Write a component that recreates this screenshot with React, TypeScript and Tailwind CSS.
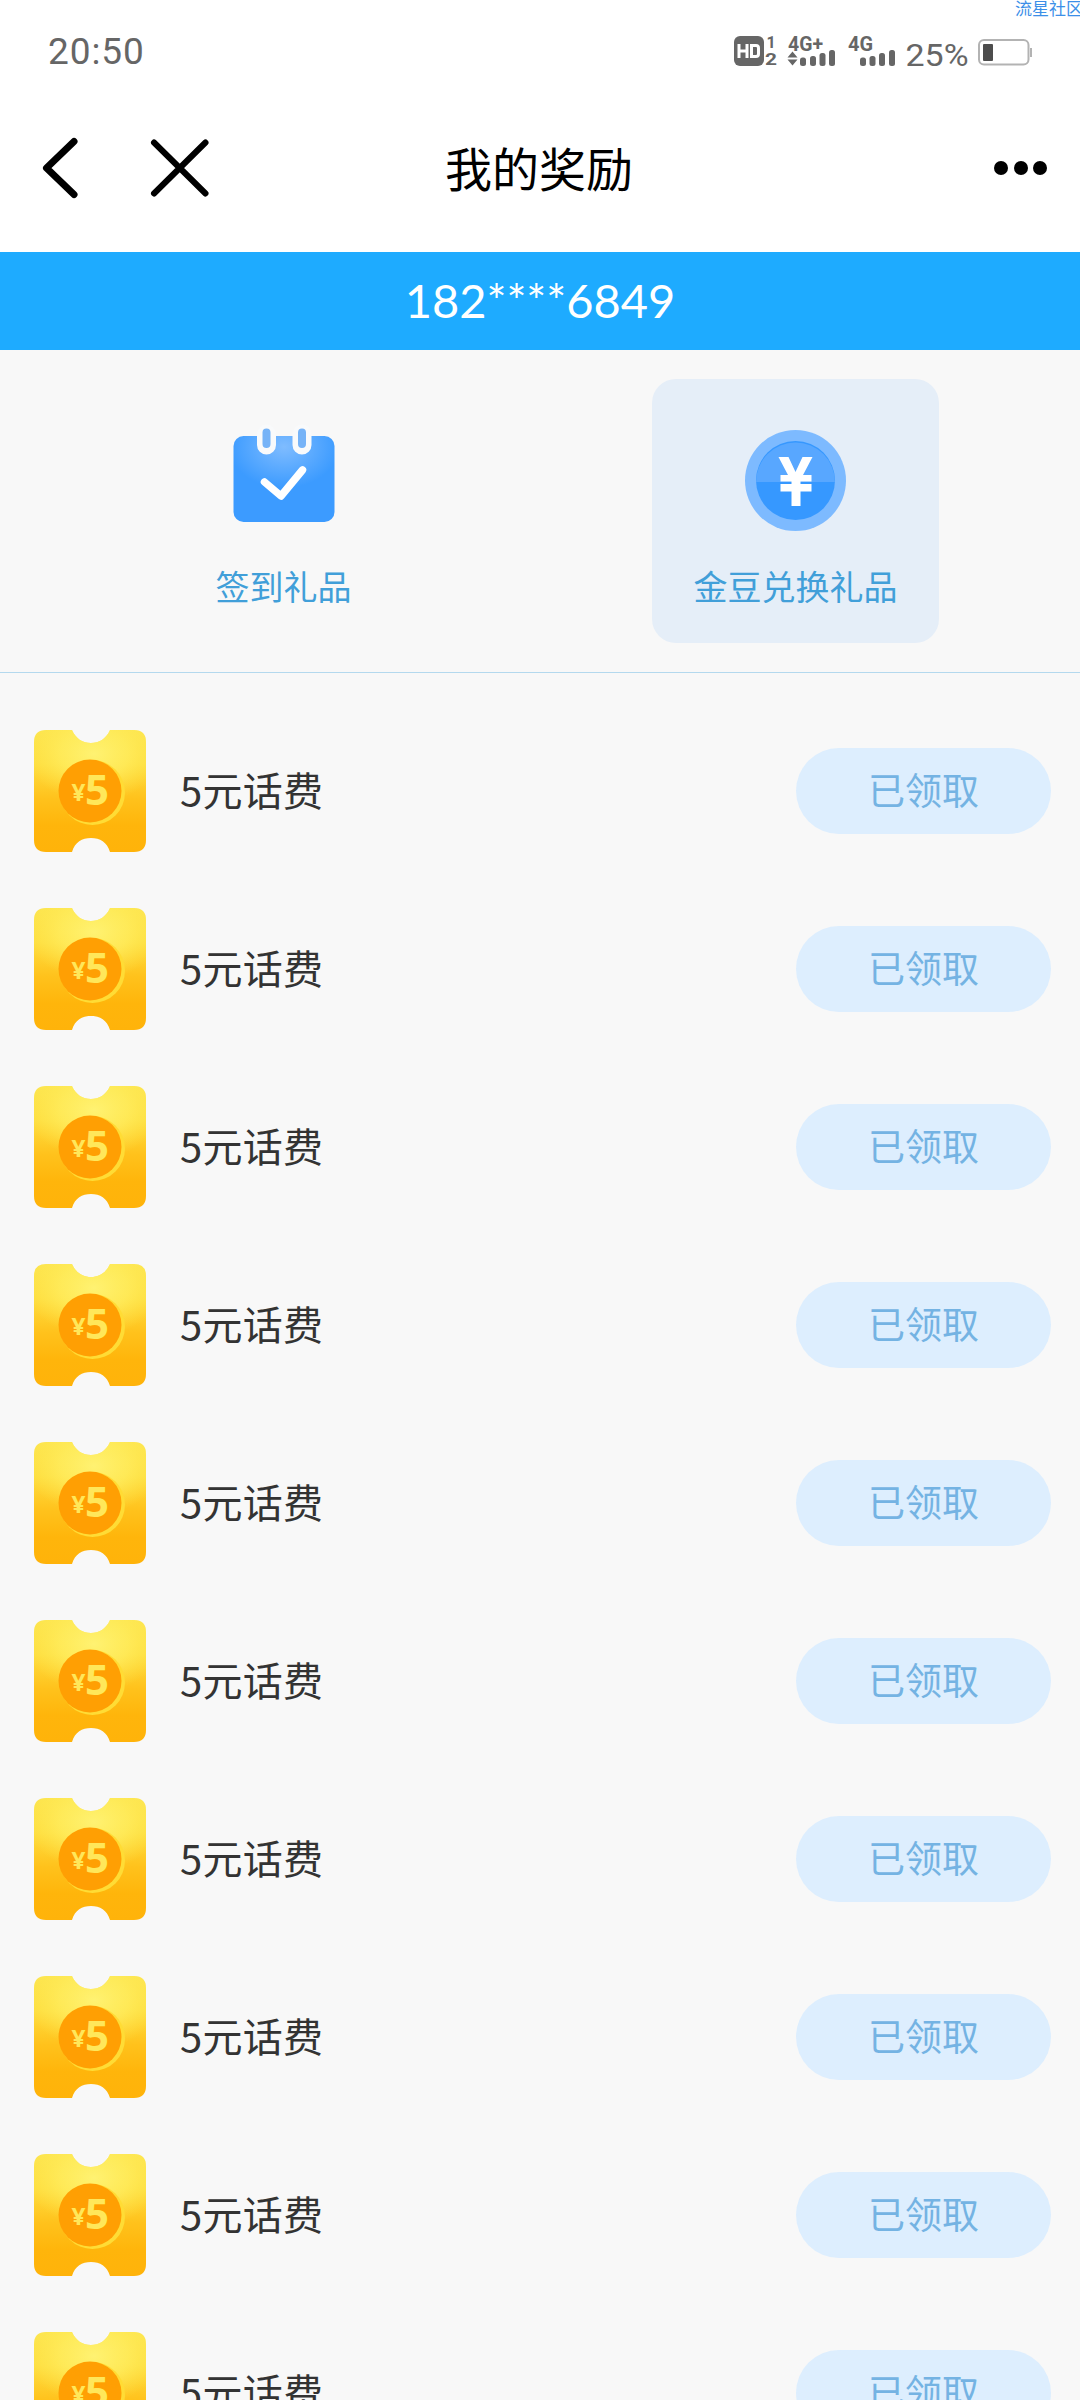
import React from "react";

interface Reward {
  id: number;
  amount: number;
  name: string;
  status: string;
}

const rewards: Reward[] = Array.from({ length: 10 }, (_, i) => ({
  id: i + 1,
  amount: 5,
  name: "5元话费",
  status: "已领取",
}));

const StatusIcons: React.FC = () => (
  <svg width="340" height="40" viewBox="730 30 340 40" className="shrink-0 overflow-visible" fill="#666">
    {/* HD voice, both SIMs */}
    <rect x="734" y="36" width="30" height="30" rx="6" />
    <path
      d="M739 44v14M747 44v14M739 51h8M751.500 45.500h4.500q2.500 0 2.500 2.500v6q0 2.500-2.500 2.500h-4.500z"
      fill="none"
      stroke="#fff"
      strokeWidth="3"
    />
    <g fontFamily="Roboto, sans-serif" fontWeight="700">
      <text x="766.500" y="47.500" fontSize="16">1</text>
      <text x="765" y="65" fontSize="17" textLength="12" lengthAdjust="spacingAndGlyphs">2</text>
      <text x="788" y="51" fontSize="20.500" textLength="35" lengthAdjust="spacingAndGlyphs">4G+</text>
      <text x="848" y="51" fontSize="20.500" textLength="25" lengthAdjust="spacingAndGlyphs">4G</text>
    </g>
    {/* Data arrows */}
    <path d="M792.500 51.500l5 6h-10zM792.500 65.500l5-6h-10z" />
    {/* Signal bars */}
    <rect x="800" y="57.500" width="6" height="8.500" rx="2.500" />
    <rect x="810" y="56" width="6" height="10" rx="2.500" />
    <rect x="819.500" y="53" width="6" height="13" rx="2.500" />
    <rect x="829" y="50" width="6" height="16" rx="2.500" />
    <rect x="860" y="57.500" width="6" height="8.500" rx="2.500" />
    <rect x="869.500" y="56" width="6" height="10" rx="2.500" />
    <rect x="879" y="53" width="6" height="13" rx="2.500" />
    <rect x="889" y="50" width="6" height="16" rx="2.500" />
    <text
      x="905.500"
      y="65.500"
      fontSize="31"
      fontFamily="Roboto, sans-serif"
      fontWeight="400"
      textLength="63"
      lengthAdjust="spacingAndGlyphs"
    >
      25%
    </text>
    {/* Battery */}
    <rect x="979" y="40" width="49.500" height="24.500" rx="5" fill="none" stroke="#b3b3b3" strokeWidth="2" />
    <rect x="983" y="44" width="10" height="17" rx="1" fill="#4d4d4d" />
    <rect x="1030" y="48" width="2" height="9" fill="#b3b3b3" />
  </svg>
);

const CalendarIcon: React.FC = () => (
  <svg width="102" height="102" viewBox="0 0 102 102" className="overflow-visible">
    <defs>
      <radialGradient id="calendar" gradientUnits="userSpaceOnUse" cx="51" cy="17" r="55" gradientTransform="translate(0 4) scale(1 .75)">
        <stop offset="0" stopColor="#7fbcff" />
        <stop offset="1" stopColor="#3c9bff" />
      </radialGradient>
    </defs>
    <rect x=".500" y="6" width="101" height="86" rx="10" fill="url(#calendar)" />
    <g fill="none" strokeLinecap="round">
      <path d="M33.500 4v11M69 4v11" stroke="#f9fafb" strokeWidth="19" />
      <path d="M33.500 2.500v11.500M69 2.500v11.500" stroke="#76b3f7" strokeWidth="8" />
      <path d="M31.500 52l16.500 14L69.500 40" stroke="#fff" strokeWidth="7.500" strokeLinejoin="round" />
    </g>
  </svg>
);

const CoinIcon: React.FC = () => (
  <svg width="102" height="102" viewBox="0 0 102 102">
    <circle cx="50.500" cy="50.500" r="50.500" fill="#7dbaff" />
    <circle cx="50.500" cy="50.500" r="39.500" fill="#3698ff" />
    <path d="M11 52a39.500 39.500 0 0 1 79 0z" fill="#58a7ff" />
    <path d="M33.500 27h10L50.500 42 57.500 27h10L58 45h8.500v6.500H55.500v2.500h11v7.500h-11v14.500h-9v-14.500h-11v-7.500h11v-2.500h-11V45H43z" fill="#fff" />
  </svg>
);

const TicketIcon: React.FC<{ amount: number }> = ({ amount }) => (
  <svg width="112" height="122" viewBox="0 0 112 122" className="shrink-0">
    <defs>
      <linearGradient id="ticket" x1="0" y1="0" x2="0" y2="1">
        <stop offset="0" stopColor="#fde54f" />
        <stop offset=".280" stopColor="#fede40" />
        <stop offset=".560" stopColor="#ffc21c" />
        <stop offset=".780" stopColor="#ffb50b" />
        <stop offset="1" stopColor="#ffb30a" />
      </linearGradient>
      <radialGradient id="shine">
        <stop offset="0" stopColor="#fff272" />
        <stop offset=".500" stopColor="#ffee60" stopOpacity=".700" />
        <stop offset="1" stopColor="#ffe94f" stopOpacity="0" />
      </radialGradient>
      <clipPath id="ticket-shape">
        <path d="M12 0H38C42 9 49 13 57 13S72 9 76 0H100Q112 0 112 12V110Q112 122 100 122H76C73 112 66 108 57 108S41 112 38 122H12Q0 122 0 110V12Q0 0 12 0Z" />
      </clipPath>
    </defs>
    <g clipPath="url(#ticket-shape)">
      <rect width="112" height="122" fill="url(#ticket)" />
      <ellipse cx="60" cy="24" rx="68" ry="48" fill="url(#shine)" />
    </g>
    <circle cx="58.500" cy="62.500" r="32.500" fill="#ffdc35" />
    <circle cx="56" cy="61" r="31.500" fill="#ff9f03" />
    <g fill="#ffe75a" fontFamily="'Open Sans', sans-serif" fontWeight="700">
      <text x="37.500" y="71" fontSize="24" textLength="14" lengthAdjust="spacingAndGlyphs">¥</text>
      <text x="51" y="75" fontSize="42" textLength="24" lengthAdjust="spacingAndGlyphs">{amount}</text>
    </g>
  </svg>
);

const RewardRow: React.FC<{ reward: Reward }> = ({ reward }) => (
  <li className="flex h-[178px] items-center pr-[29px] pl-[34px]">
    <TicketIcon amount={reward.amount} />
    <span className="ml-[34px] pb-1 text-[40px] leading-none tracking-[0.3px] text-[#333]">{reward.name}</span>
    <button className="ml-auto h-[86px] w-[255px] rounded-full bg-[#ddeefe] pb-1 text-[37px] leading-none text-[#74b3e3]">
      {reward.status}
    </button>
  </li>
);

export default function App() {
  return (
    <div className="relative h-[2400px] w-[1080px] overflow-hidden bg-[#f8f8f8] font-['Noto_Sans_CJK_SC',sans-serif]">
      <span className="absolute top-0 left-[1015px] text-[17px] leading-[16px] whitespace-nowrap text-[#3c8fe8]">
        流星社区
      </span>

      <header className="h-[252px] bg-white">
        <div className="flex h-[100px] items-center justify-between pr-2.5 pl-12">
          <time className="pt-1 font-[Roboto,sans-serif] text-[37px] tracking-[0.9px] text-[#666]">20:50</time>
          <StatusIcons />
        </div>
        <div className="flex h-[136px] items-center px-[33px]">
          <div className="flex flex-1 items-center">
            <svg width="180" height="64" viewBox="0 0 180 64" fill="none" stroke="#000" strokeLinecap="round" strokeLinejoin="round">
              <path d="M41 5.500L13.500 32L41 58.500" strokeWidth="7" />
              <path d="M121 6.500L172.500 57.500M172.500 6.500L121 57.500" strokeWidth="6" />
            </svg>
          </div>
          <h1 className="pr-0.5 pb-1 text-[47px] leading-none text-black">我的奖励</h1>
          <div className="flex flex-1 items-center justify-end gap-[5.5px]">
            <i className="size-[14px] rounded-full bg-black" />
            <i className="size-[14px] rounded-full bg-black" />
            <i className="size-[14px] rounded-full bg-black" />
          </div>
        </div>
      </header>

      <div className="flex h-[98px] items-center justify-center bg-[#1eabff] pb-0.5 font-[Lato,sans-serif] text-[47px] text-white">
        182****6849
      </div>

      <nav className="flex h-[323px] gap-[225px] border-b border-[#b4d9ee] pt-[29px] pl-[140px]">
        <button className="flex h-[264px] w-[287px] flex-col items-center rounded-3xl pt-[51px] text-[34px] text-[#419fd9]">
          <CalendarIcon />
          <span className="mt-[37px] leading-none">签到礼品</span>
        </button>
        <button className="flex h-[264px] w-[287px] flex-col items-center rounded-3xl bg-[#e5eef8] pt-[51px] text-[34px] text-[#419fd9]">
          <CoinIcon />
          <span className="mt-[37px] leading-none">金豆兑换礼品</span>
        </button>
      </nav>

      <ul className="pt-[29px]">
        {rewards.map((reward) => (
          <RewardRow key={reward.id} reward={reward} />
        ))}
      </ul>
    </div>
  );
}
